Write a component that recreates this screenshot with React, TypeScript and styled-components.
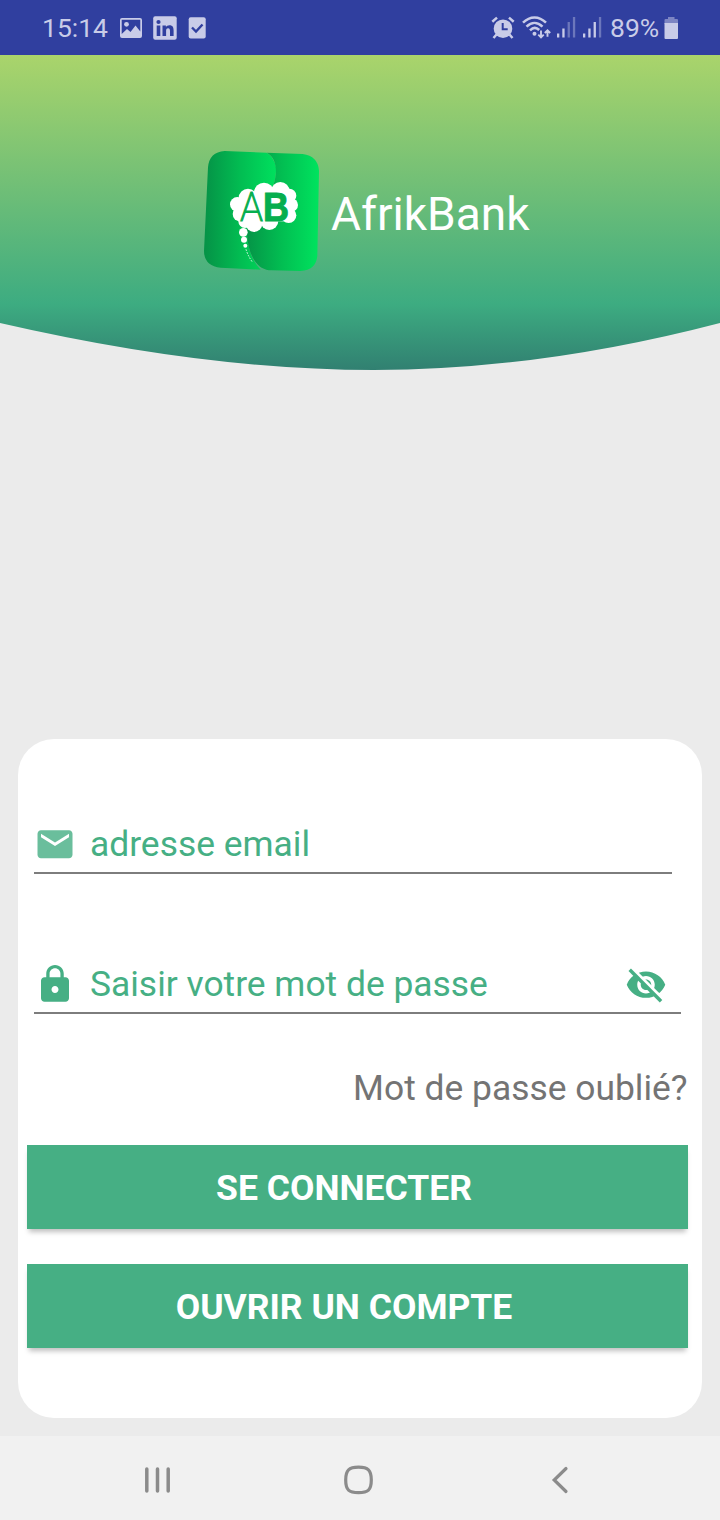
import React from "react";
import styled, { createGlobalStyle } from "styled-components";

const GREEN = "#46af84";
const TINT = "#c9cce8";

const GlobalStyle = createGlobalStyle`
  * { box-sizing: border-box; }
  body { margin: 0; font-family: Roboto, "Liberation Sans", sans-serif; background: #ebebeb; }
  svg { display: block; flex: none; }
`;

const Screen = styled.div`
  width: 720px;
  height: 1520px;
  display: flex;
  flex-direction: column;
  background: #ebebeb;
  overflow: hidden;
`;

const StatusBar = styled.header`
  height: 55px;
  flex: none;
  display: flex;
  align-items: center;
  justify-content: space-between;
  padding: 0 41px 0 42px;
  background: #303f9f;
  color: ${TINT};
`;

const StatusGroup = styled.div`
  display: flex;
  align-items: center;
`;

const Notifications = styled(StatusGroup)`
  gap: 11px;
`;

const Indicators = styled(StatusGroup)`
  gap: 7px;
`;

const StatusText = styled.span<{ $width: number }>`
  width: ${(p) => p.$width}px;
  font-size: 26.5px;
  line-height: 32px;
  padding-top: 1px;
  white-space: nowrap;
`;

const Hero = styled.section`
  height: 315px;
  flex: none;
  display: grid;
  grid-template: 1fr / 1fr;
`;

const HeroWave = styled.svg`
  grid-area: 1 / 1;
`;

const Brand = styled.div`
  grid-area: 1 / 1;
  z-index: 1;
  display: flex;
  align-items: flex-start;
  padding: 85px 0 0 190px;
`;

const BrandName = styled.h1`
  margin: 47px 0 0 -9px;
  font-size: 46px;
  line-height: 54px;
  font-weight: 400;
  color: #fff;
`;

const Card = styled.main`
  margin: auto 18px 18px;
  height: 679px;
  flex: none;
  border-radius: 36px;
  background: #fff;
  padding: 74px 14px 0 9px;
  display: flex;
  flex-direction: column;
`;

const Field = styled.label<{ $width: number; $gap?: number }>`
  width: ${(p) => p.$width}px;
  height: 61px;
  margin: 0 0 ${(p) => p.$gap ?? 0}px 7px;
  padding: 2px 14px 0 0;
  display: flex;
  align-items: center;
  border-bottom: 2px solid #7d7d7d;
`;

const FieldText = styled.span`
  flex: 1;
  margin-left: 14px;
  font-size: 35.4px;
  line-height: 42px;
  color: ${GREEN};
  white-space: nowrap;
`;

const Forgot = styled.a`
  align-self: flex-end;
  margin: 53px 0.5px 36px 0;
  font-size: 35.4px;
  line-height: 42px;
  color: #747474;
  white-space: nowrap;
`;

const Button = styled.button`
  width: 661px;
  height: 84px;
  flex: none;
  margin: 0 0 35px;
  padding: 2px 27px 0 0;
  border: 0;
  background: ${GREEN};
  color: #fff;
  font: 700 35.5px/42px Roboto, "Liberation Sans", sans-serif;
  text-transform: uppercase;
  box-shadow: 0 5px 5px -2px rgba(0, 0, 0, 0.25);
`;

const NavBar = styled.nav`
  height: 84px;
  flex: none;
  display: grid;
  grid-template-columns: 199px 208px auto;
  align-items: center;
  padding: 3px 0 0 144px;
  background: #f1f1f1;
`;

const PictureIcon = () => (
  <svg width="22" height="20" viewBox="0 0 22 20" fill={TINT}>
    <path fillRule="evenodd" d="M2 0h18a2 2 0 0 1 2 2v16a2 2 0 0 1-2 2H2a2 2 0 0 1-2-2V2a2 2 0 0 1 2-2zM1.700 1.700v14.300l5.300-5 3.500 3 5-6.500 4.800 6V1.700z" />
    <circle cx="6.500" cy="6.300" r="2.400" />
  </svg>
);

const LinkedInIcon = () => (
  <svg width="24" height="24" viewBox="0 0 24 24">
    <rect x="0.200" y="0.200" width="23.500" height="23.500" rx="2" fill={TINT} />
    <g fill="#303f9f">
      <circle cx="5.500" cy="6" r="2.100" />
      <path d="M3.700 9.500h3.600V20H3.700zM9.500 9.500h3.400v1.500c.7-1.100 1.900-1.800 3.500-1.800 3.400 0 4.200 2.200 4.200 5.300V20H17v-4.900c0-1.400-.2-2.800-1.900-2.800s-2 1.400-2 2.700v5H9.500z" />
    </g>
  </svg>
);

const TaskIcon = () => (
  <svg width="18" height="22" viewBox="0 0 18 22">
    <rect x="0.700" y="0.300" width="17" height="21.200" rx="2" fill={TINT} />
    <path d="M4 10.500l4 4 6.500-7" fill="none" stroke="#303f9f" strokeWidth="2.400" />
  </svg>
);

const AlarmIcon = () => (
  <svg width="24" height="24" viewBox="0 0 24 24">
    <circle cx="12" cy="12.700" r="9.300" fill={TINT} />
    <path d="M1.300 5.700L6 1.600M22.700 5.700L18 1.600M5.500 18.500l-3 3.500M18.500 18.500l3 3.500" stroke={TINT} strokeWidth="2.500" fill="none" />
    <path d="M11.700 7v6.300h5" stroke="#303f9f" strokeWidth="2" fill="none" />
  </svg>
);

const WifiIcon = () => (
  <svg width="30" height="24" viewBox="0 0 30 24" fill="none" stroke={TINT}>
    <path d="M1 6.700C8-.3 17-.3 24 6.700M4.500 10.700c5-5 11-5 16 0M8 14.300c3-3 6.500-3 9.200-.3" strokeWidth="2.500" />
    <circle cx="12.500" cy="17.800" r="2" fill={TINT} stroke="none" />
    <path d="M19 14.500v6.500M16.300 18.600l2.700 2.700 2.700-2.700M25.500 20.700v-6.500M22.800 17l2.700-2.700 2.700 2.700" strokeWidth="1.900" />
  </svg>
);

const SignalIcon = ({ level }: { level: number }) => (
  <svg width="19" height="21" viewBox="0 0 19 21" fill={TINT}>
    {[4, 9, 15.5, 20.5].map((h, i) => (
      <rect key={h} x={i * 5.3} y={20.5 - h} width="2.300" height={h} opacity={i < level ? 1 : 0.4} />
    ))}
  </svg>
);

const Signals = styled.div`
  display: flex;
  gap: 7px;
  margin: 0 1px 0 -2px;
`;

const BatteryIcon = () => (
  <svg width="15" height="22" viewBox="0 0 15 22" fill={TINT}>
    <path d="M4 0h6.500v2H13a1 1 0 0 1 1 1v4H.5V3a1 1 0 0 1 1-1H4z" opacity=".5" />
    <path d="M.5 6H14v15a1 1 0 0 1-1 1H1.500a1 1 0 0 1-1-1z" />
  </svg>
);

const Logo = () => (
  <svg width="150" height="140" viewBox="0 0 450 420">
    <defs>
      <linearGradient id="leftLeaf" gradientUnits="userSpaceOnUse" x1="48" y1="0" x2="255" y2="0">
        <stop offset="0" stopColor="#059447" />
        <stop offset=".5" stopColor="#02bd52" />
        <stop offset="1" stopColor="#00df5d" />
      </linearGradient>
      <linearGradient id="rightLeaf" gradientUnits="userSpaceOnUse" x1="170" y1="0" x2="386" y2="0">
        <stop offset="0" stopColor="#059447" />
        <stop offset=".5" stopColor="#02bf52" />
        <stop offset="1" stopColor="#00e35e" />
      </linearGradient>
    </defs>
    <path fill="url(#leftLeaf)" d="M104 33L230 38Q252 50 258 82Q260 110 250 135L200 250L170 266Q172 350 212 389L92 383Q42 378 42 332L54 82Q58 36 104 33Z" />
    <path fill="url(#rightLeaf)" d="M230 38L338 42Q384 48 387 92L382 348Q378 390 332 393L245 391C200 391 172 345 170 266L250 135C263 100 262 55 230 38Z" />
    <g fill="#fff">
      <circle cx="222" cy="158" r="30" />
      <circle cx="271" cy="154" r="28" />
      <circle cx="174" cy="174" r="28" />
      <circle cx="142" cy="193" r="22" />
      <circle cx="150" cy="222" r="22" />
      <circle cx="165" cy="244" r="20" />
      <circle cx="192" cy="251" r="25" />
      <circle cx="238" cy="243" r="27" />
      <circle cx="296" cy="226" r="23" />
      <circle cx="304" cy="195" r="20" />
      <circle cx="298" cy="167" r="21" />
      <rect x="155" y="158" width="138" height="86" />
      <circle cx="160" cy="277" r="13" />
      <circle cx="162" cy="299" r="9" />
      <circle cx="166" cy="317" r="6" />
    </g>
    <path d="M168 328Q174 348 187 366" fill="none" stroke="#fff" strokeWidth="2.500" strokeDasharray="5 4" />
    <g fill="#06ae4e" stroke="#06ae4e">
      <text x="150" y="242" fontSize="122" fontFamily="Roboto, sans-serif" fontWeight="200" strokeWidth="3" textLength="69" lengthAdjust="spacingAndGlyphs">A</text>
      <text x="219" y="242" fontSize="120" fontFamily="Liberation Sans, sans-serif" fontWeight="700" strokeWidth="3" textLength="78" lengthAdjust="spacingAndGlyphs">B</text>
    </g>
  </svg>
);

const MailIcon = () => (
  <svg width="42" height="43" viewBox="0 -0.400 24 24" fill={GREEN} opacity=".8">
    <path d="M20 4H4c-1.100 0-1.990.9-1.990 2L2 18c0 1.100.9 2 2 2h16c1.100 0 2-.9 2-2V6c0-1.100-.9-2-2-2zm0 4l-8 5-8-5V6l8 5 8-5v2z" />
  </svg>
);

const LockIcon = () => (
  <svg width="42" height="43" viewBox="0 -0.400 24 24" fill={GREEN}>
    <path d="M18 8h-1V6c0-2.760-2.240-5-5-5S7 3.240 7 6v2H6c-1.100 0-2 .9-2 2v10c0 1.100.9 2 2 2h12c1.100 0 2-.9 2-2V10c0-1.100-.9-2-2-2zm-6 9c-1.100 0-2-.9-2-2s.9-2 2-2 2 .9 2 2-.9 2-2 2zm3.100-9H8.900V6c0-1.710 1.390-3.100 3.100-3.100 1.710 0 3.100 1.390 3.100 3.100v2z" />
  </svg>
);

const EyeOffIcon = () => (
  <svg width="42" height="42" viewBox="0 -0.400 24 24" fill={GREEN}>
    <path d="M12 4.500C7 4.500 2.730 7.610 1 12c1.730 4.390 6 7.500 11 7.500s9.270-3.110 11-7.500c-1.730-4.390-6-7.500-11-7.500zM12 17c-2.760 0-5-2.240-5-5s2.240-5 5-5 5 2.240 5 5-2.240 5-5 5zm0-8c-1.660 0-3 1.340-3 3s1.340 3 3 3 3-1.340 3-3-1.340-3-3-3z" />
    <path d="M3.500 2.100L22.300 20.900" stroke="#fff" strokeWidth="1.900" />
    <path d="M2.700 3.500L20.600 21.400" stroke={GREEN} strokeWidth="2" />
  </svg>
);

const RecentsIcon = () => (
  <svg width="27" height="28" viewBox="0 0 27 28" stroke="#8b8b8b" strokeWidth="3.500" strokeLinecap="round">
    <path d="M2.800 3v22M13.500 3v22M24.200 3v22" />
  </svg>
);

const HomeIcon = () => (
  <svg width="30" height="30" viewBox="0 0 30 30" fill="none" stroke="#8b8b8b" strokeWidth="3.200">
    <path d="M15.500 2.200C25 2.200 28.300 5 28.300 15S25 27.600 15.500 27.600 2.700 25 2.700 15 6 2.200 15.500 2.200z" />
  </svg>
);

const BackIcon = () => (
  <svg width="18" height="28" viewBox="0 0 18 28" fill="none" stroke="#8b8b8b" strokeWidth="3.200" strokeLinecap="round">
    <path d="M15 2.500L3.200 14 15 25.500" />
  </svg>
);

export default function App() {
  return (
    <Screen>
      <GlobalStyle />
      <StatusBar>
        <Notifications>
          <StatusText $width={67}>15:14</StatusText>
          <PictureIcon />
          <LinkedInIcon />
          <TaskIcon />
        </Notifications>
        <Indicators>
          <AlarmIcon />
          <WifiIcon />
          <Signals>
            <SignalIcon level={2} />
            <SignalIcon level={3} />
          </Signals>
          <StatusText $width={47}>89%</StatusText>
          <BatteryIcon />
        </Indicators>
      </StatusBar>
      <Hero>
        <HeroWave width="720" height="315" viewBox="0 55 720 315">
          <defs>
            <linearGradient id="hero" gradientUnits="userSpaceOnUse" x1="0" y1="55" x2="0" y2="370">
              <stop offset="0" stopColor="#aad46b" />
              <stop offset=".79" stopColor="#3dac81" />
              <stop offset="1" stopColor="#318071" />
            </linearGradient>
          </defs>
          <path fill="url(#hero)" d="M0 55H720V323Q540 370 374 370Q204 370 0 323Z" />
        </HeroWave>
        <Brand>
          <Logo />
          <BrandName>AfrikBank</BrandName>
        </Brand>
      </Hero>
      <Card>
        <Field $width={638} $gap={79}>
          <MailIcon />
          <FieldText>adresse email</FieldText>
        </Field>
        <Field $width={647}>
          <LockIcon />
          <FieldText>Saisir votre mot de passe</FieldText>
          <EyeOffIcon />
        </Field>
        <Forgot>Mot de passe oublié?</Forgot>
        <Button>Se connecter</Button>
        <Button>Ouvrir un compte</Button>
      </Card>
      <NavBar>
        <RecentsIcon />
        <HomeIcon />
        <BackIcon />
      </NavBar>
    </Screen>
  );
}
